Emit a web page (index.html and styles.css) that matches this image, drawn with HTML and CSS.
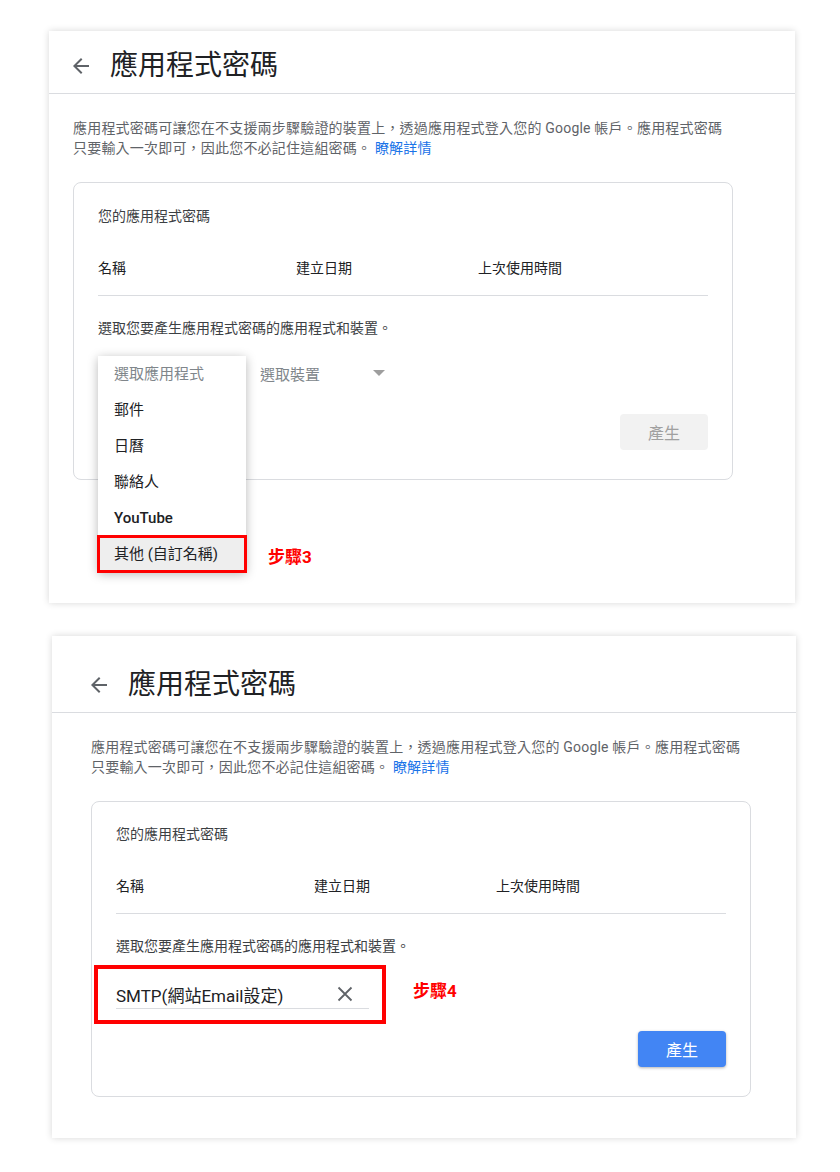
FILE: index.html
```html
<!DOCTYPE html>
<html lang="zh-Hant">
<head>
    <meta charset="UTF-8">
    <meta name="viewport" content="width=device-width, initial-scale=1.0">
    <title>應用程式密碼</title>
    <link rel="stylesheet" href="styles.css">
</head>
<body>
    <div class="page">
        <section class="panel panel-first">
            <header class="panel-header">
                <svg class="back-icon" viewBox="0 0 24 24" width="24" height="24"><path d="M20 11H7.83l5.59-5.59L12 4l-8 8 8 8 1.41-1.41L7.83 13H20v-2z"/></svg>
                <h1 class="panel-title">應用程式密碼</h1>
            </header>
            <div class="panel-body">
                <p class="intro">應用程式密碼可讓您在不支援兩步驟驗證的裝置上，透過應用程式登入您的 Google 帳戶。應用程式密碼<br>只要輸入一次即可，因此您不必記住這組密碼。 <a class="link" href="#">瞭解詳情</a></p>

                <div class="card">
                    <div class="card-label">您的應用程式密碼</div>
                    <div class="table-head">
                        <span class="col-name">名稱</span>
                        <span class="col-date">建立日期</span>
                        <span>上次使用時間</span>
                    </div>
                    <p class="hint">選取您要產生應用程式密碼的應用程式和裝置。</p>

                    <div class="pick-row">
                        <div class="select select-app">選取應用程式</div>
                        <div class="select select-device">選取裝置<span class="caret"></span></div>

                        <ul class="menu">
                            <li class="menu-item placeholder">選取應用程式</li>
                            <li class="menu-item">郵件</li>
                            <li class="menu-item">日曆</li>
                            <li class="menu-item">聯絡人</li>
                            <li class="menu-item latin">YouTube</li>
                            <li class="menu-item active marked">其他 (自訂名稱)</li>
                        </ul>
                        <span class="step step-3">步驟3</span>
                    </div>

                    <div class="actions">
                        <button class="btn btn-disabled">產生</button>
                    </div>
                </div>
            </div>
        </section>

        <section class="panel panel-second">
            <header class="panel-header">
                <svg class="back-icon" viewBox="0 0 24 24" width="24" height="24"><path d="M20 11H7.83l5.59-5.59L12 4l-8 8 8 8 1.41-1.41L7.83 13H20v-2z"/></svg>
                <h1 class="panel-title">應用程式密碼</h1>
            </header>
            <div class="panel-body">
                <p class="intro">應用程式密碼可讓您在不支援兩步驟驗證的裝置上，透過應用程式登入您的 Google 帳戶。應用程式密碼<br>只要輸入一次即可，因此您不必記住這組密碼。 <a class="link" href="#">瞭解詳情</a></p>

                <div class="card">
                    <div class="card-label">您的應用程式密碼</div>
                    <div class="table-head">
                        <span class="col-name">名稱</span>
                        <span class="col-date">建立日期</span>
                        <span>上次使用時間</span>
                    </div>
                    <p class="hint">選取您要產生應用程式密碼的應用程式和裝置。</p>

                    <div class="pick-row">
                        <div class="field">
                            <span class="field-text">SMTP(網站Email設定)</span>
                            <svg class="clear-icon" viewBox="0 0 24 24" width="24" height="24"><path d="M5.5 5.5L18.5 18.5M18.5 5.5L5.5 18.5"/></svg>
                        </div>
                        <span class="step step-4">步驟4</span>
                    </div>

                    <div class="actions">
                        <button class="btn btn-primary">產生</button>
                    </div>
                </div>
            </div>
        </section>
    </div>
</body>
</html>
```

FILE: styles.css
```css
body {
    margin: 0;
    background-color: #fff;
    font-family: Roboto, "Noto Sans CJK TC", sans-serif;
    color: #202124;
}
.page {
    padding: 31px 0 34px;
}
.panel {
    --pad: 24px;
    background-color: #fff;
    box-shadow: 0 0 7px rgba(0, 0, 0, 0.16);
}
.panel-first {
    margin-left: 49px;
    width: 746px;
    padding: 8px 0 123px;
}
.panel-second {
    --pad: 39px;
    margin: 33px 0 0 52px;
    width: 744px;
    padding: 22px 0 41px;
}
.panel-header {
    display: flex;
    align-items: center;
    height: 54px;
    padding-left: calc(var(--pad) - 4px);
    border-bottom: 1px solid #dadce0;
}
.back-icon {
    fill: #5f6368;
    flex-shrink: 0;
}
.panel-title {
    margin: 0 0 0 17px;
    font-size: 28px;
    font-weight: 400;
    line-height: 36px;
    color: #202124;
}
.panel-body {
    padding-left: var(--pad);
}
.intro {
    margin: 24px 0 0;
    font-size: 14px;
    line-height: 20px;
    letter-spacing: 0.2px;
    color: #5f6368;
}
.link {
    color: #1a73e8;
    text-decoration: none;
}
.card {
    width: 610px;
    margin-top: 24px;
    padding: 23px 24px 29px;
    border: 1px solid #dadce0;
    border-radius: 8px;
}
.panel-second .card {
    padding-top: 22px;
}
.card-label {
    font-size: 14px;
    line-height: 20px;
    color: #3c4043;
}
.table-head {
    display: flex;
    margin-top: 32px;
    padding-bottom: 17px;
    border-bottom: 1px solid #dadce0;
    font-size: 14px;
    line-height: 20px;
    color: #202124;
}
.col-name {
    width: 198px;
}
.col-date {
    width: 182px;
}
.hint {
    margin: 22px 0 0;
    font-size: 14px;
    line-height: 20px;
    color: #3c4043;
}
.pick-row {
    position: relative;
    display: flex;
    align-items: center;
    gap: 16px;
    height: 36px;
    margin-top: 18px;
}
.select {
    display: flex;
    align-items: center;
    height: 34px;
    padding-bottom: 2px;
    font-size: 15px;
    color: #80868b;
}
.select-app {
    width: 130px;
    padding-left: 16px;
}
.select-device {
    width: 129px;
    justify-content: space-between;
}
.caret {
    width: 0;
    height: 0;
    margin-right: 4px;
    border-left: 6px solid transparent;
    border-right: 6px solid transparent;
    border-top: 6px solid #9e9e9e;
}
.menu {
    position: absolute;
    top: 0;
    left: 0;
    width: 148px;
    margin: 0;
    padding: 0;
    list-style: none;
    background-color: #fff;
    box-shadow: 0 2px 10px rgba(0, 0, 0, 0.28);
}
.menu-item {
    height: 36px;
    padding-left: 16px;
    font-size: 15px;
    line-height: 36px;
    color: #202124;
}
.menu-item.placeholder {
    color: #80868b;
}
.menu-item.latin {
    font-weight: 500;
}
.menu-item.active {
    background-color: #eeeeee;
}
.marked {
    outline: 3px solid #ff0000;
    outline-offset: -2px;
}
.step {
    position: absolute;
    font-size: 17px;
    font-weight: 700;
    line-height: 24px;
    color: #ff0000;
}
.step-3 {
    left: 170px;
    top: 189px;
}
.step-4 {
    left: 297px;
    top: 5px;
}
.field {
    position: relative;
    display: flex;
    align-items: center;
    justify-content: space-between;
    width: 253px;
    height: 28px;
    padding-top: 5px;
    border-bottom: 1px solid #dadce0;
    font-size: 17px;
    color: #202124;
}
.field::after {
    content: "";
    position: absolute;
    left: -22px;
    top: -10px;
    width: 284px;
    height: 51px;
    border: 4px solid #ff0000;
}
.clear-icon {
    margin-right: 12px;
    fill: none;
    stroke: #5f6368;
    stroke-width: 1.8;
}
.actions {
    display: flex;
    justify-content: flex-end;
    margin-top: 22px;
}
.panel-second .actions {
    margin-top: 21px;
}
.btn {
    width: 88px;
    height: 36px;
    border: none;
    border-radius: 4px;
    font-family: inherit;
    font-size: 16px;
}
.btn-disabled {
    background-color: #f2f2f2;
    color: #a0a0a0;
}
.btn-primary {
    background-color: #4285f4;
    color: #fff;
    box-shadow: 0 1px 3px rgba(0, 0, 0, 0.3);
    cursor: pointer;
}
```
